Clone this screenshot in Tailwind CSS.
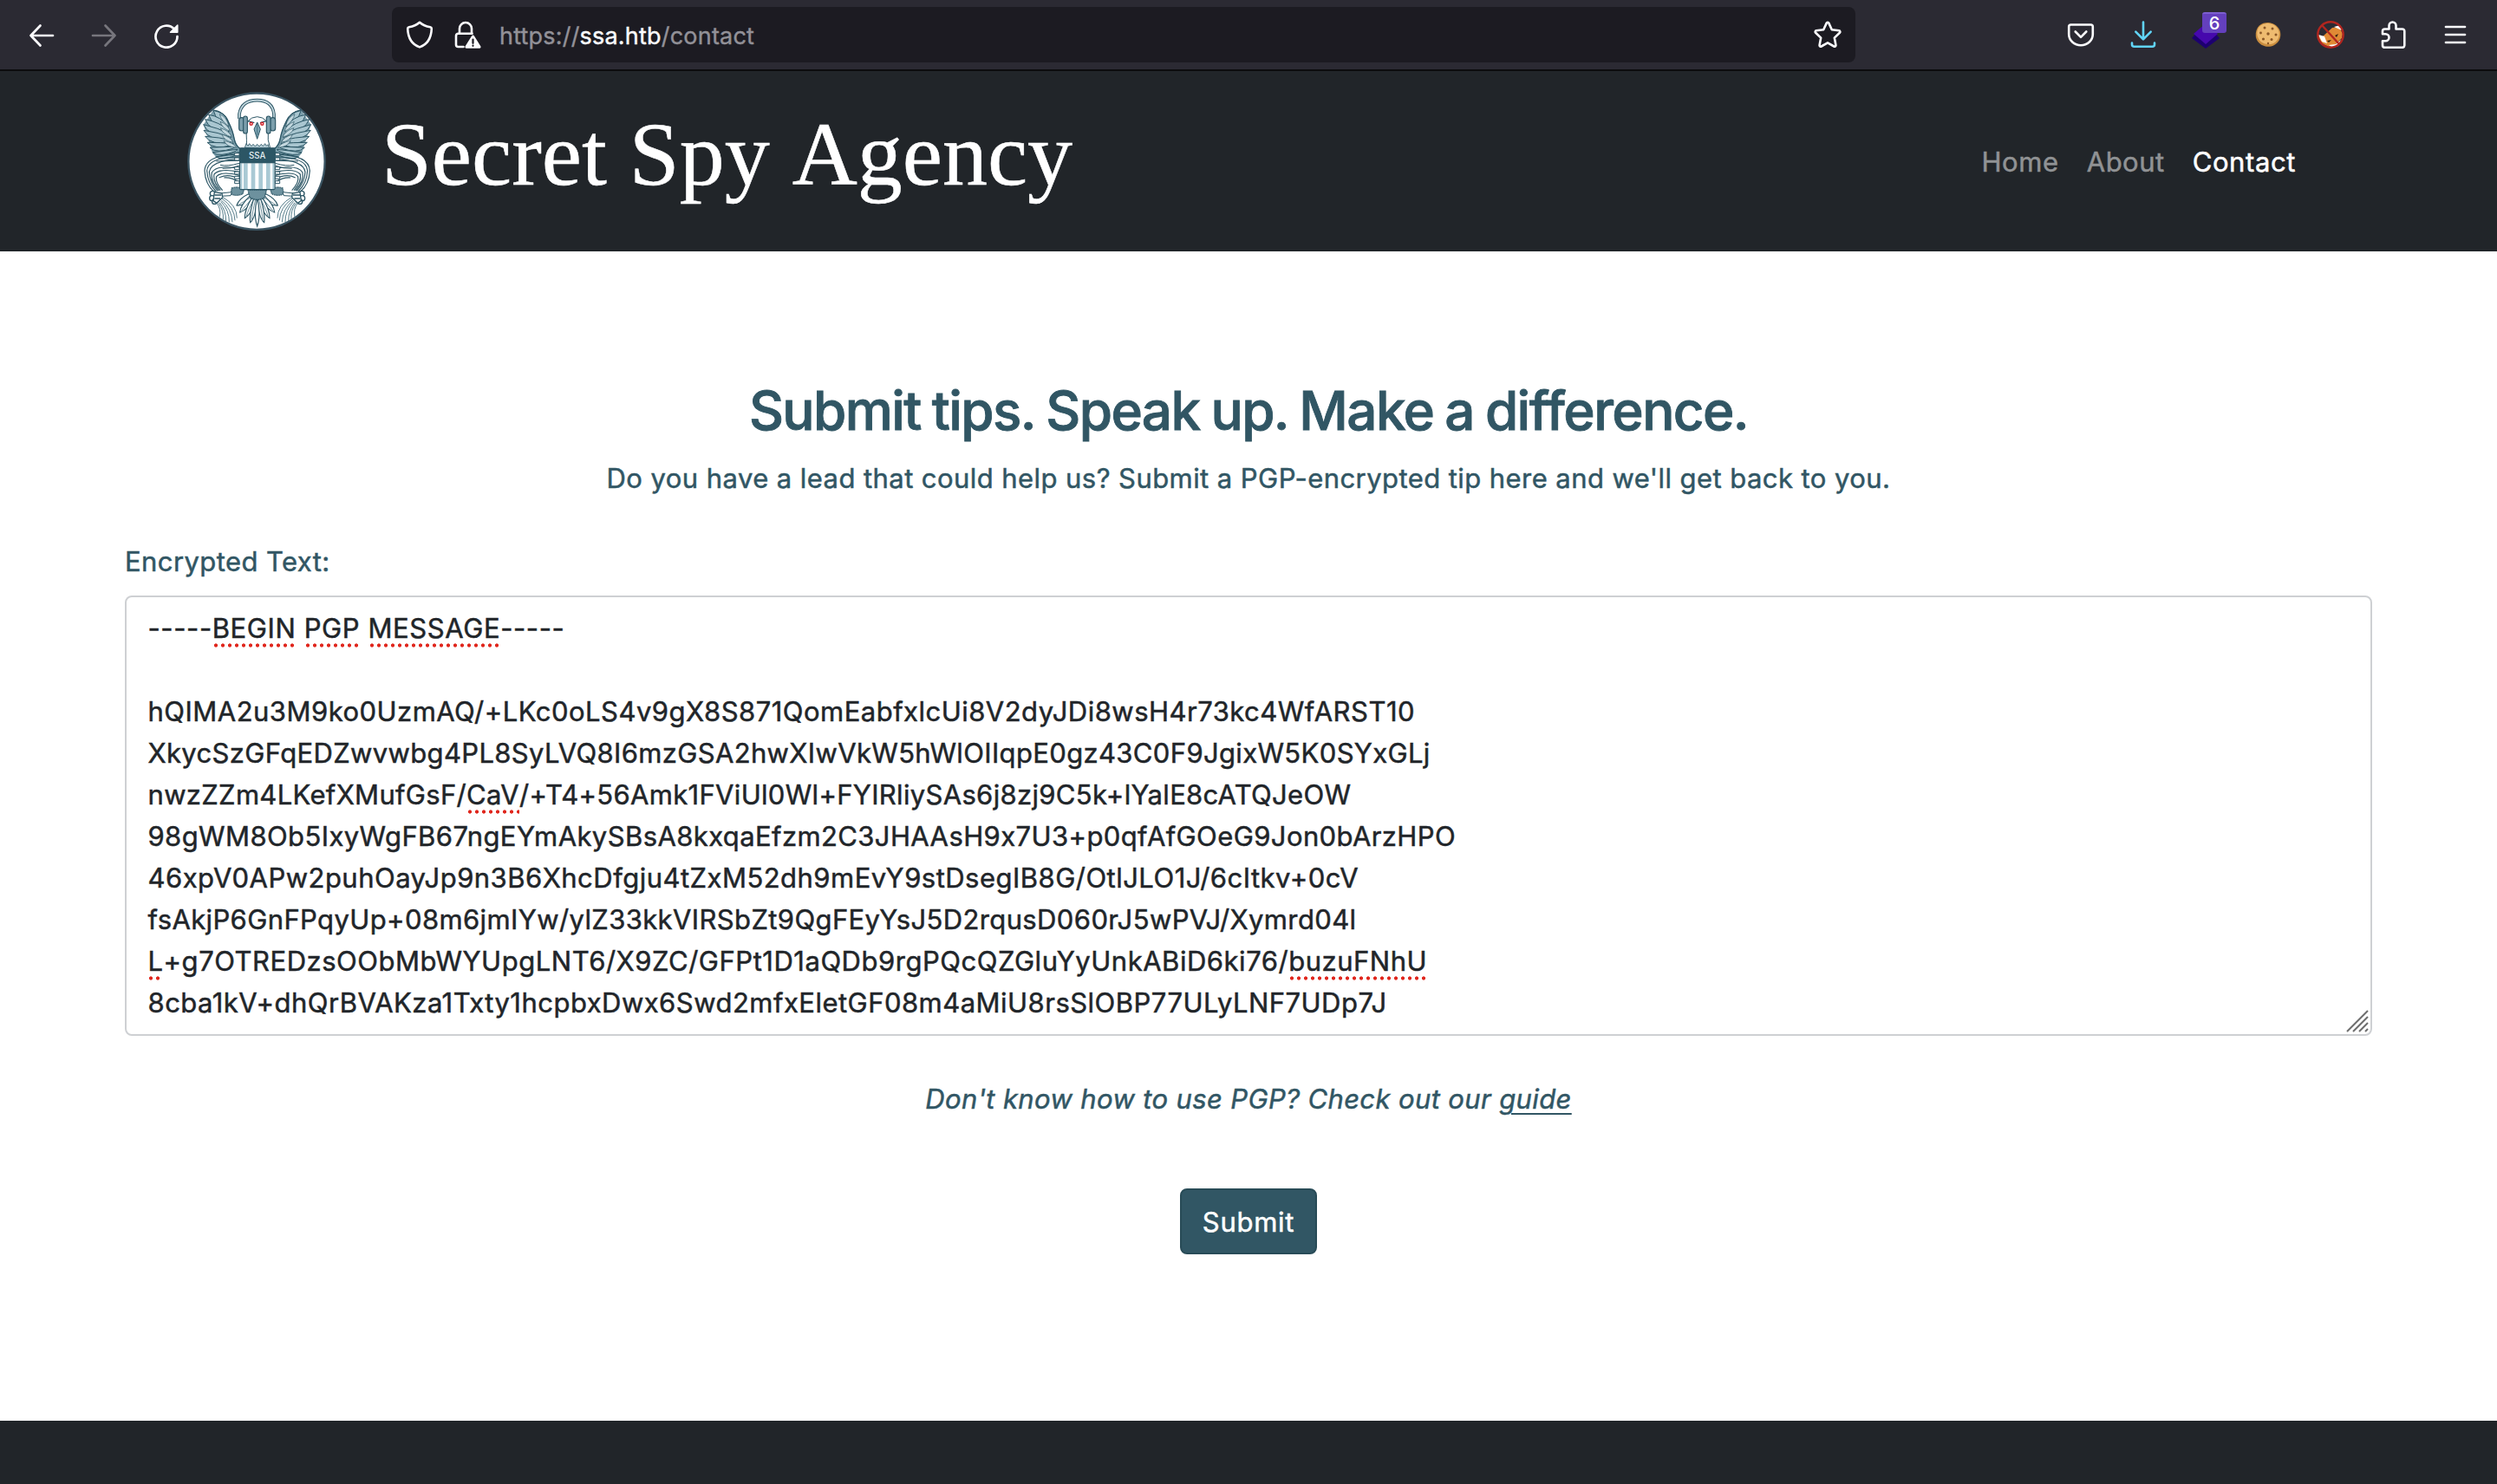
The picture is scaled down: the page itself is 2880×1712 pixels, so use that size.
<!DOCTYPE html>
<html lang="en">
<head>
<meta charset="utf-8">
<title>Secret Spy Agency</title>
<script src="https://cdn.jsdelivr.net/npm/@tailwindcss/browser@4"></script>
</head>
<body class="w-[2880px] h-[1712px] overflow-hidden flex flex-col bg-white font-[Inter,sans-serif] [font-feature-settings:'calt'_0]">

<!-- Browser toolbar -->
<div class="h-[82px] shrink-0 flex items-center bg-[#2b2a33] border-b-2 border-[#0c0c0e] px-3 text-white">
  <div class="w-[72px] flex justify-center"><svg class="size-8" viewBox="0 0 32 32" fill="none" stroke="#fbfbfe" stroke-width="2.7" stroke-linecap="round" stroke-linejoin="round"><path d="M29 17H3.5M14.500 5.500L3.500 17l11 11.500"/></svg></div>
  <div class="w-[72px] flex justify-center"><svg class="size-8" viewBox="0 0 32 32" fill="none" stroke="#77767d" stroke-width="2.7" stroke-linecap="round" stroke-linejoin="round"><path d="M3 17h25.500M17.500 5.500L28.500 17l-11 11.500"/></svg></div>
  <div class="w-[72px] flex justify-center"><svg class="size-8" viewBox="0 0 32 32" fill="none" stroke="#fbfbfe" stroke-width="2.7" stroke-linecap="round" stroke-linejoin="round"><path d="M28.500 18A12.500 12.500 0 1 1 25 9.500"/><path d="M28.800 5v8.300h-8.300z" fill="#fbfbfe" stroke-width="1.500"/></svg></div>

  <div class="ml-[224px] w-[1688px] h-16 rounded-lg bg-[#1c1b22] flex items-center px-4">
    <svg class="size-8" viewBox="0 0 32 32" fill="none" stroke="#fbfbfe" stroke-width="2.600" stroke-linejoin="round"><path d="M16 1.800C12.500 5 8 6.600 3.800 7.200c-1 .200-1.600.900-1.600 1.900C2.600 19.500 6.500 27 16 30.400 25.500 27 29.400 19.500 29.800 9.100c0-1-.600-1.700-1.600-1.900C24 6.600 19.500 5 16 1.800z"/></svg>
    <svg class="ml-6 size-8" viewBox="0 0 32 32" fill="none" stroke="#fbfbfe" stroke-width="2.600" stroke-linejoin="round" stroke-linecap="round"><path d="M6 14.500V9a7 7 0 0 1 14 0v5.500"/><path d="M10.500 30H4.500a2.500 2.500 0 0 1-2.500-2.500V17.300a2.500 2.500 0 0 1 2.500-2.500h16"/><path d="M21.500 16.500c.700 0 1.200.400 1.500 1l7.300 11.800c.700 1.200 0 2.500-1.300 2.500H14c-1.300 0-2-1.300-1.300-2.500L20 17.500c.300-.600.800-1 1.500-1z" fill="#fbfbfe" stroke="none"/><path d="M21.500 21.500v4.300M21.500 28.700v.100" stroke="#1c1b22" stroke-width="2.200"/></svg>
    <div class="ml-5 pt-[3px] text-[27px] leading-[40px] tracking-[0.2px] text-[#929198] [-webkit-text-stroke:0.4px]">https://<span class="text-[#fbfbfe]">ssa.htb</span>/contact</div>
    <svg class="ml-auto size-8" viewBox="0 0 32 32" fill="none" stroke="#fbfbfe" stroke-width="2.600" stroke-linejoin="round"><path d="M14.700 2.600c.500-1.100 2.100-1.100 2.600 0l3.500 7.700 8.300 1c1.200.200 1.700 1.600.800 2.500l-6.100 5.800 1.600 8.400c.200 1.200-1 2.100-2.100 1.500L16 25.400l-7.300 4.100c-1.100.600-2.300-.300-2.100-1.500l1.600-8.400-6.100-5.800c-.900-.900-.400-2.300.800-2.500l8.300-1z"/></svg>
  </div>

  <div class="ml-auto flex items-center">
    <div class="w-[72px] flex justify-center"><svg class="size-8" viewBox="0 0 32 32" fill="none" stroke="#fbfbfe" stroke-width="2.600" stroke-linejoin="round" stroke-linecap="round"><path d="M4.500 4.500h23a2.300 2.300 0 0 1 2.300 2.300v8.700a13.800 12.800 0 0 1-27.600 0V6.800a2.300 2.300 0 0 1 2.300-2.300z"/><path d="M9.700 12.500l6.300 6.300 6.300-6.300"/></svg></div>
    <div class="w-[72px] flex justify-center"><svg class="size-8" viewBox="0 0 32 32" fill="none" stroke="#61d5f8" stroke-width="2.600" stroke-linejoin="round" stroke-linecap="round"><path d="M16 1.500v19.500M7.300 12.700L16 21.400l8.700-8.700M3 25.500v1.800a2.500 2.500 0 0 0 2.500 2.500h21a2.500 2.500 0 0 0 2.500-2.500v-1.800"/></svg></div>
    <div class="w-[72px] flex justify-center relative">
      <svg class="size-8" viewBox="0 0 32 32"><path d="M3.500 16h25L32 20 16 32 0 20z" fill="#1d0070"/><path d="M16 3l14 12-14 12L2 15z" fill="#4608ad"/></svg>
      <div class="absolute left-8 -top-[10px] w-7 h-6 rounded-[3px] bg-[#6440bd] border-t-2 border-[#7d5fd0] text-white text-[20px] leading-[22px] font-medium text-center">6</div>
    </div>
    <div class="w-[72px] flex justify-center"><svg class="size-8" viewBox="0 0 32 32"><path d="M16 2c3 0 5 1 7 2 3 1.500 5 4 6.500 7 1 3 1.200 6 .200 9-1 4-4 6.500-7 8.200-4 2-9 2-12.500.300C5 26.500 2.300 22 1.800 18c-.500-5 1-9.500 4-12.500C8.500 3 12 2 16 2z" fill="#c98d3f"/><path d="M16 3c6 0 11 4 12.500 9.500 1 5-1 10.500-5.500 13-5 2.500-11.500 2-15.500-1.500C3.500 20 2 14 4.500 9 6.500 5 11 3 16 3z" fill="#eebb70"/><g fill="#8b5726"><circle cx="12" cy="8" r="1.500"/><circle cx="21" cy="9" r="1.500"/><circle cx="7.500" cy="14" r="1.400"/><circle cx="16" cy="15" r="1.700"/><circle cx="25" cy="16" r="1.500"/><circle cx="10.500" cy="21" r="1.600"/><circle cx="20" cy="21.500" r="1.500"/><circle cx="16" cy="26" r="1.200"/></g></svg></div>
    <div class="w-[72px] flex justify-center"><svg class="size-8" viewBox="0 0 32 32"><path d="M18 8l8-1 4 8-1 5-7 7-8 3-8-4-5-9 6 1z" fill="#e08a35"/><path d="M20 7l7-2 2 6z" fill="#fff"/><path d="M2 16l7 2 3 8-6-2z" fill="#fff"/><path d="M14 28l8-1 6-5-3 7-7 2z" fill="#fff"/><path d="M12 23l5-1-3 3zM21 17l4-2-2 4z" fill="#34210f"/><circle cx="16" cy="16" r="14.700" fill="none" stroke="#b2261f" stroke-width="2.400"/><path d="M6 5l20 22" stroke="#b2261f" stroke-width="2.400"/></svg></div>
    <div class="w-[72px] flex justify-center"><svg class="size-8" viewBox="0 0 32 32" fill="none" stroke="#fbfbfe" stroke-width="2.600" stroke-linejoin="round"><path d="M11.500 9.500V5.500a4 4 0 0 1 8 0v4h7.300a2.500 2.500 0 0 1 2.500 2.500v16.500a2.500 2.500 0 0 1-2.500 2.300H6.500A2.500 2.500 0 0 1 4 28.300v-5.100h3.500a4 4 0 0 0 0-8H4V12a2.500 2.500 0 0 1 2.500-2.500z"/></svg></div>
    <div class="w-[72px] flex justify-center"><svg class="size-8" viewBox="0 0 32 32" fill="none" stroke="#fbfbfe" stroke-width="2.700" stroke-linecap="round"><path d="M5 7h22M5 16h22M5 25h22"/></svg></div>
  </div>
</div>

<!-- Site navigation -->
<header class="h-[208px] shrink-0 bg-[#212529] flex items-center pl-[216px] pr-[232px]">
  <svg class="size-40 shrink-0" viewBox="48 45 480 480">
    <defs>
      <g id="half">
        <!-- wing -->
        <path d="M138 108C160 112 182 128 190 148c7 16 14 28 18 45 6 20 8 35 22 48v34l-60 4c-20-4-30-14-36-26L104 158z" fill="#7c9fac"/>
        <g fill="#a9c6d0" stroke="#2c5665" stroke-width="3">
          <path d="M185 165Q150 150 138 108Q176 112 190 150z"/>
          <path d="M185 175Q135 165 122 124Q165 130 190 165z"/>
          <path d="M188 188Q125 180 110 140Q160 150 192 178z"/>
          <path d="M190 200Q120 197 104 158Q155 170 195 190z"/>
          <path d="M193 210Q125 214 105 178Q155 185 198 202z"/>
          <path d="M197 220Q130 230 110 199Q160 202 203 213z"/>
          <path d="M202 230Q140 246 117 220Q165 220 208 224z"/>
          <path d="M208 240Q150 260 126 238Q170 236 214 234z"/>
          <path d="M216 250Q160 272 136 255Q180 248 222 244z"/>
          <path d="M226 260Q175 284 146 270Q190 262 228 254z"/>
        </g>
        <g fill="#c4d8df" stroke="#2c5665" stroke-width="2">
          <path d="M192 165Q165 145 160 122Q185 132 192 165z"/><path d="M196 182Q168 170 162 148Q190 158 196 182z"/>
          <path d="M202 202Q170 192 163 170Q195 180 202 202z"/><path d="M207 220Q175 215 168 192Q200 202 207 220z"/>
          <path d="M218 238Q185 236 174 214Q208 220 218 238z"/>
        </g>
        <path d="M140 109Q178 116 190 148Q206 180 210 206Q214 230 230 241" fill="none" stroke="#2c5665" stroke-width="4"/>
        <g fill="none" stroke="#2c5665" stroke-width="3"><path d="M228 283l-80 2M228 292q-40 12-66 6M228 300q-30 12-58 10"/></g>
        <!-- cables -->
        <g fill="none" stroke="#2c5665" stroke-width="3.500">
          <path d="M228 262Q110 262 108 318Q110 365 142 392"/>
          <path d="M228 270Q120 270 116 318Q118 360 148 390"/>
          <path d="M228 278Q130 282 124 322Q126 358 153 388"/>
          <path d="M228 310Q150 296 133 324Q128 356 158 387"/>
          <path d="M228 322Q160 308 141 330Q136 356 163 386"/>
          <path d="M228 334Q165 318 149 338Q144 358 170 386"/>
          <path d="M228 346Q188 326 158 342"/><path d="M228 358Q200 340 175 342"/>
        </g>
        <g fill="#fff" stroke="#2c5665" stroke-width="3">
          <path d="M212 257h16v9h-16zM212 273h16v9h-16zM212 305h16v9h-16zM212 321h16v9h-16zM212 337h16v9h-16zM212 353h16v9h-16z"/>
        </g>
        <!-- leg and claw -->
        <path d="M202 378q26-8 42 6l-4 14q-24 10-42 0z" fill="#6d919e" stroke="#2c5665" stroke-width="4" stroke-dasharray="4 2"/>
        <path d="M202 392l-40 4v10l36-2z" fill="#fff" stroke="#2c5665" stroke-width="3"/>
        <g fill="#fff" stroke="#2c5665" stroke-width="4">
          <circle cx="136" cy="397" r="9"/><circle cx="134" cy="413" r="9"/><circle cx="142" cy="425" r="8"/><path d="M142 392l26 4 2 14-20 20-12-8z"/><path d="M142 402h24M142 414h20"/>
        </g>
        <g fill="none" stroke="#4a7482" stroke-width="2.800">
          <path d="M150 430Q166 450 160 478M156 430Q175 455 172 486M160 428Q182 455 182 492M164 424Q194 455 193 496M166 420Q202 450 204 496M168 414Q212 445 213 490M168 408Q220 436 220 482"/>
        </g>
        <!-- tail -->
        <g fill="#fff" stroke="#2c5665" stroke-width="3.500">
          <path d="M264 396Q226 414 219 438Q246 440 276 412z"/>
          <path d="M266 404Q232 436 230 462Q256 454 280 414z"/>
          <path d="M272 410Q246 454 247 482Q270 470 286 416z"/>
          <path d="M278 414Q262 466 266 497Q284 482 290 420z"/>
        </g>
        <g fill="none" stroke="#4a7482" stroke-width="2.500"><path d="M272 408Q240 426 226 436M274 412Q246 444 236 456M278 416Q258 456 253 474M284 418Q272 466 271 488"/></g>
      </g>
    </defs>
    <circle cx="288" cy="285.500" r="236" fill="#fff" stroke="#3b5563" stroke-width="7"/>
    <use href="#half"/>
    <use href="#half" transform="translate(580 0) scale(-1 1)"/>
    <path d="M290 412Q276 470 290 510Q304 470 290 412z" fill="#fff" stroke="#2c5665" stroke-width="3.500"/>
    <path d="M258 384h64l-6 26q-26 16-52 0z" fill="#6d919e" stroke="#2c5665" stroke-width="4" stroke-dasharray="5 2"/>
    <!-- head -->
    <path d="M253 240Q254 212 252 180Q248 134 290 131Q332 134 328 180Q324 212 335 240z" fill="#fff" stroke="#2c5665" stroke-width="3"/>
    <path d="M247 238l5-14 6 8 5-8 7 9 6-7 7 8 7-8 7 8 7-8 6 7 7-9 5 8 5-5 5 17z" fill="#b5cdd6" stroke="#2c5665" stroke-width="2.500"/>
    <path d="M290 150l11 24-11 34-11-34z" fill="#7fa6b5" stroke="#2c5665" stroke-width="3"/>
    <path d="M290 154v40" stroke="#2c5665" stroke-width="2"/>
    <path d="M258 146l22 6M322 146l-22 6" stroke="#2c5665" stroke-width="4"/>
    <g fill="#fff" stroke="#d3252c" stroke-width="4.500"><circle cx="269" cy="155" r="4.500"/><circle cx="307" cy="155" r="4.500"/></g>
    <!-- headphones -->
    <path d="M228 138V122Q236 74 290 74Q342 74 348 122V138" fill="none" stroke="#2c5665" stroke-width="11"/>
    <path d="M228 138V122Q236 74 290 74Q342 74 348 122V138" fill="none" stroke="#c4d8df" stroke-width="5"/>
    <g fill="#7c9fac" stroke="#2c5665" stroke-width="3.500"><rect x="227" y="134" width="18" height="46" rx="9"/><rect x="242" y="129" width="14" height="60" rx="7"/><rect x="335" y="134" width="18" height="46" rx="9"/><rect x="322" y="129" width="14" height="60" rx="7"/></g>
    <!-- shield -->
    <rect x="230" y="240" width="121" height="143" rx="4" fill="#fff" stroke="#2c5665" stroke-width="4"/>
    <path d="M243 292h14v89h-14zM269 292h14v89h-14zM295 292h14v89h-14zM321 292h14v89h-14z" fill="#a9c9d4"/>
    <path d="M232 292h6v89h-6zM343 292h6v89h-6z" fill="#a9c9d4"/>
    <rect x="228" y="239" width="124" height="53" fill="#2c5665"/>
    <text x="290" y="276" text-anchor="middle" font-family="Inter" font-size="29" font-weight="500" fill="#e6eff2">SSA</text>
  </svg>
  <div class="ml-16 pb-[17px] font-['Liberation_Serif',serif] text-[104px] leading-[116px] [font-kerning:none] text-white whitespace-nowrap [-webkit-text-stroke:0.5px]">Secret Spy Agency</div>
  <nav class="ml-auto pt-0.5 flex gap-8 text-[31px] leading-[48px] text-[#909294] [-webkit-text-stroke:0.5px]">
    <a class="tracking-[0.6px]">Home</a>
    <a class="tracking-[0.5px]">About</a>
    <a class="tracking-[0.6px] text-white">Contact</a>
  </nav>
</header>

<!-- Tip form -->
<main class="h-[1349px] shrink-0 px-36 pt-[145px] flex flex-col text-[31px] leading-[47px] text-[#315664] [-webkit-text-stroke:0.5px]">
  <h1 class="text-center text-[62px] leading-[77px] font-medium tracking-[-1.6px] [word-spacing:-2px] [-webkit-text-stroke:0.9px]">Submit tips. Speak up. Make a difference.</h1>
  <p class="mt-4 text-center tracking-[0.434px]">Do you have a lead that could help us? Submit a PGP-encrypted tip here and we'll get back to you.</p>
  <label class="mt-[49px] tracking-[0.42px]">Encrypted Text:</label>
  <div class="relative mt-4 h-[508px] border-2 border-[#ced0d3] rounded-lg pl-[24.5px] pt-3 leading-[48px] text-[#212529] whitespace-nowrap">
    <div class="h-12 tracking-[0.587px]">-----<span class="relative after:absolute after:inset-x-0 after:top-[36px] after:h-[5px] after:bg-[radial-gradient(circle,#e0261c_1.7px,transparent_2.5px)] after:bg-[length:8px_5px]">BEGIN</span> <span class="relative after:absolute after:inset-x-0 after:top-[36px] after:h-[5px] after:bg-[radial-gradient(circle,#e0261c_1.7px,transparent_2.5px)] after:bg-[length:8px_5px]">PGP</span> <span class="relative after:absolute after:inset-x-0 after:top-[36px] after:h-[5px] after:bg-[radial-gradient(circle,#e0261c_1.7px,transparent_2.5px)] after:bg-[length:8px_5px]">MESSAGE</span>-----</div>
    <div class="h-12"></div>
    <div class="h-12 tracking-[0.477px]">hQIMA2u3M9ko0UzmAQ/+LKc0oLS4v9gX8S871QomEabfxlcUi8V2dyJDi8wsH4r73kc4WfARST10</div>
    <div class="h-12 tracking-[0.346px]">XkycSzGFqEDZwvwbg4PL8SyLVQ8I6mzGSA2hwXIwVkW5hWlOIIqpE0gz43C0F9JgixW5K0SYxGLj</div>
    <div class="h-12 tracking-[0.317px]">nwzZZm4LKefXMufGsF/<span class="relative after:absolute after:inset-x-0 after:top-[36px] after:h-[5px] after:bg-[radial-gradient(circle,#e0261c_1.7px,transparent_2.5px)] after:bg-[length:8px_5px]">CaV</span>/+T4+56Amk1FViUl0Wl+FYIRliySAs6j8zj9C5k+lYalE8cATQJeOW</div>
    <div class="h-12 tracking-[0.397px]">98gWM8Ob5IxyWgFB67ngEYmAkySBsA8kxqaEfzm2C3JHAAsH9x7U3+p0qfAfGOeG9Jon0bArzHPO</div>
    <div class="h-12 tracking-[0.472px]">46xpV0APw2puhOayJp9n3B6XhcDfgju4tZxM52dh9mEvY9stDsegIB8G/OtlJLO1J/6cItkv+0cV</div>
    <div class="h-12 tracking-[0.379px]">fsAkjP6GnFPqyUp+08m6jmIYw/ylZ33kkVIRSbZt9QgFEyYsJ5D2rqusD060rJ5wPVJ/Xymrd04l</div>
    <div class="h-12 tracking-[0.522px]"><span class="relative after:absolute after:-left-px after:w-4 after:top-[36px] after:h-[5px] after:bg-[radial-gradient(circle,#e0261c_1.7px,transparent_2.5px)] after:bg-[length:8px_5px]">L</span>+g7OTREDzsOObMbWYUpgLNT6/X9ZC/GFPt1D1aQDb9rgPQcQZGluYyUnkABiD6ki76/<span class="relative after:absolute after:inset-x-0 after:top-[36px] after:h-[5px] after:bg-[radial-gradient(circle,#e0261c_1.7px,transparent_2.5px)] after:bg-[length:8px_5px]">buzuFNhU</span></div>
    <div class="h-12 tracking-[0.475px]">8cba1kV+dhQrBVAKza1Txty1hcpbxDwx6Swd2mfxEletGF08m4aMiU8rsSlOBP77ULyLNF7UDp7J</div>
    <svg class="absolute right-0.5 bottom-0.5 w-[26px] h-[26px]" viewBox="0 0 26 26" fill="none" stroke="#6e6e6e" stroke-width="2"><path d="M1 25L25 1M8 25L25 8M15 25L25 15M22 25l3-3"/></svg>
  </div>
  <p class="mt-[49px] text-center italic tracking-[0.372px]">Don't know how to use PGP? Check out our <a class="underline decoration-2 underline-offset-[5px]">guide</a></p>
  <button class="mt-20 self-center w-[158px] h-[76px] rounded-lg border-2 border-[#284b57] bg-[#315664] text-white tracking-[0.725px]">Submit</button>
</main>

<footer class="flex-1 bg-[#212529]"></footer>
</body>
</html>
